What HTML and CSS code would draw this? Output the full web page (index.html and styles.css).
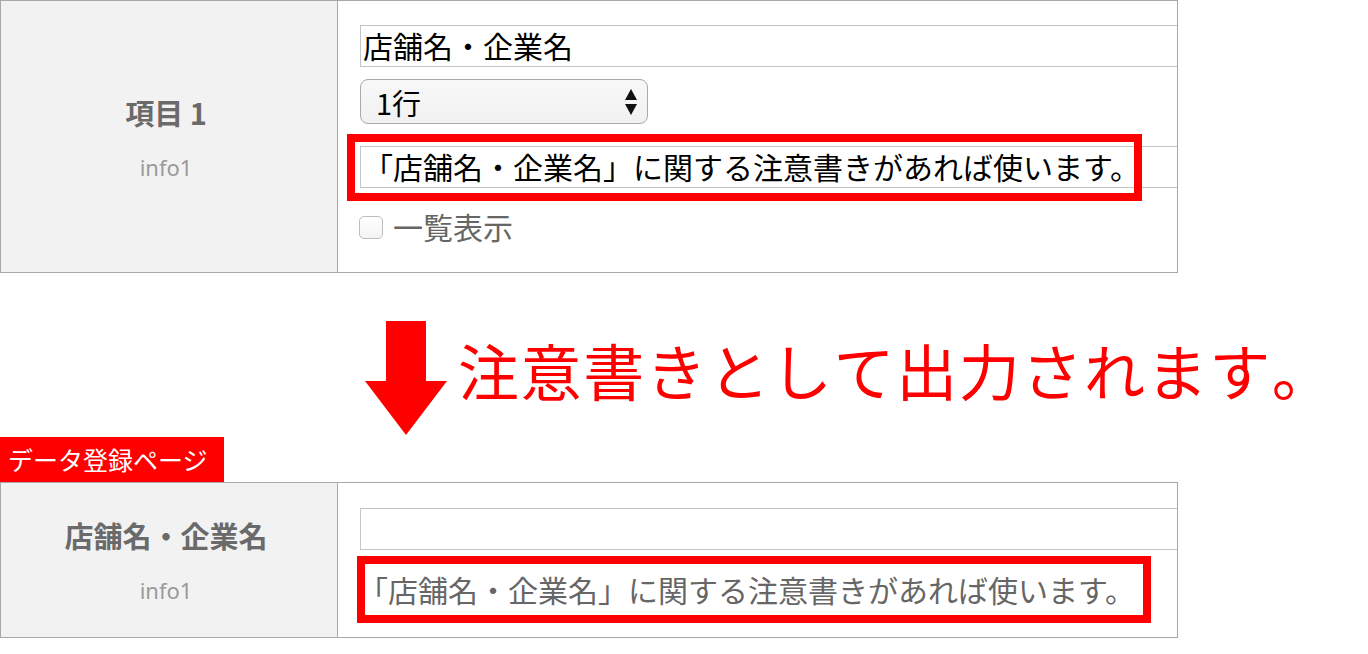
FILE: index.html
```html
<!DOCTYPE html>
<html lang="ja">
<head>
<meta charset="utf-8">
<title>注意書きの設定</title>
<link rel="stylesheet" href="styles.css">
</head>
<body>
<section class="form-table form-table--settings">
  <div class="label-cell">
    <div class="label-title">項目 1</div>
    <div class="label-key">info1</div>
  </div>
  <div class="field-cell field-cell--settings">
    <input class="text-input" type="text" value="店舗名・企業名">
    <div class="select">
      <span class="select-value">1行</span>
      <svg class="select-arrows" width="12" height="26" viewBox="0 0 12 26" aria-hidden="true">
        <polygon points="0,11 12,11 6,0" fill="#111"/>
        <polygon points="0,15 12,15 6,26" fill="#111"/>
      </svg>
    </div>
    <div class="annotated">
      <input class="text-input" type="text" value="「店舗名・企業名」に関する注意書きがあれば使います。">
      <span class="highlight"></span>
    </div>
    <label class="check"><input class="checkbox" type="checkbox">一覧表示</label>
  </div>
</section>

<div class="explain">
  <svg class="arrow" width="82" height="114" viewBox="0 0 82 114" aria-hidden="true">
    <rect x="21" y="0" width="40" height="61" fill="#ff0000"/>
    <polygon points="0,60 82,60 41,114" fill="#ff0000"/>
  </svg>
  <p class="explain-text">注意書きとして出力されます。</p>
</div>

<div class="page-tag">データ登録ページ</div>
<section class="form-table form-table--entry">
  <div class="label-cell">
    <div class="label-title">店舗名・企業名</div>
    <div class="label-key">info1</div>
  </div>
  <div class="field-cell field-cell--entry">
    <input class="text-input" type="text">
    <p class="callout">「店舗名・企業名」に関する注意書きがあれば使います。</p>
  </div>
</section>
</body>
</html>
```

FILE: styles.css
```css
* {
  box-sizing: border-box;
}

html,
body {
  margin: 0;
  padding: 0;
  background: #ffffff;
}

body {
  width: 1368px;
  font-family: "Noto Sans CJK JP", "Noto Sans", sans-serif;
  color: #000000;
}

/* ---------- form table ---------- */
.form-table {
  display: grid;
  grid-template-columns: 337px 1fr;
  width: 1178px;
  border: 1px solid #a8a8a8;
}

.form-table--settings {
  height: 273px;
}

.form-table--entry {
  height: 156px;
}

.label-cell {
  display: flex;
  flex-direction: column;
  align-items: center;
  justify-content: center;
  padding-right: 6px;
  background: #f2f2f2;
  border-right: 1px solid #a8a8a8;
}

.label-title {
  font-size: 29px;
  font-weight: 700;
  line-height: 40px;
  color: #6a6a6a;
  white-space: nowrap;
}

.label-key {
  margin-top: 20px;
  font-family: "Noto Sans", sans-serif;
  font-size: 22px;
  line-height: 30px;
  color: #9a9a9a;
}

.field-cell {
  display: flex;
  flex-direction: column;
  align-items: flex-start;
  padding-left: 22px;
  overflow: hidden;
}

.field-cell--settings {
  padding-top: 24px;
}

.field-cell--entry {
  padding-top: 25px;
}

.text-input {
  display: block;
  flex: none;
  width: 880px;
  height: 42px;
  margin: 0;
  padding: 0 2px 2px;
  border: 1px solid #c4c4c4;
  border-radius: 0;
  background: #ffffff;
  font-family: "Noto Sans CJK JP", sans-serif;
  font-size: 30px;
  color: #000000;
  outline: none;
}

/* ---------- select ---------- */
.select {
  display: flex;
  align-items: center;
  justify-content: space-between;
  width: 288px;
  height: 45px;
  margin-top: 12px;
  padding: 2px 10px 0 15px;
  border: 1px solid #a9a9a9;
  border-radius: 8px;
  background: linear-gradient(#f8f8f8, #f1f1f1);
}

.select-value {
  font-size: 29px;
  line-height: 1;
  color: #000000;
}

.select-arrows {
  display: block;
  margin-top: -2px;
}

/* ---------- annotated note input ---------- */
.annotated {
  position: relative;
  margin-top: 22px;
}

.highlight {
  position: absolute;
  left: -13px;
  top: -12px;
  width: 795px;
  height: 67px;
  border: 8px solid #ff0000;
  pointer-events: none;
}

/* ---------- checkbox ---------- */
.check {
  display: flex;
  align-items: center;
  gap: 10px;
  margin-top: 24px;
  margin-left: -1px;
  font-size: 30px;
  line-height: 26px;
  color: #666666;
}

.checkbox {
  appearance: none;
  -webkit-appearance: none;
  width: 24px;
  height: 23px;
  margin: 4px 0 0;
  border: 1px solid #bdbdbd;
  border-radius: 5px;
  background: linear-gradient(#ffffff, #f3f3f3);
}

/* ---------- explanation ---------- */
.explain {
  display: flex;
  align-items: flex-start;
  gap: 11px;
  margin-top: 48px;
  padding-left: 365px;
}

.arrow {
  display: block;
  flex: none;
}

.explain-text {
  margin: 19px 0 0;
  font-size: 61px;
  line-height: 60px;
  letter-spacing: 1.6px;
  color: #ff0000;
  font-kerning: none;
  font-feature-settings: "kern" 0, "palt" 0;
  white-space: nowrap;
}

/* ---------- page tag ---------- */
.page-tag {
  width: fit-content;
  margin-top: 2px;
  padding: 0 16px 0 8px;
  background: #ff0000;
  color: #ffffff;
  font-size: 25px;
  line-height: 45px;
  white-space: nowrap;
}

/* ---------- output callout ---------- */
.callout {
  flex: none;
  width: 794px;
  height: 67px;
  margin: 6px 0 0 -3px;
  border: 8px solid #ff0000;
  font-size: 30px;
  line-height: 51px;
  color: #666666;
  text-indent: -7px;
  white-space: nowrap;
}
```
